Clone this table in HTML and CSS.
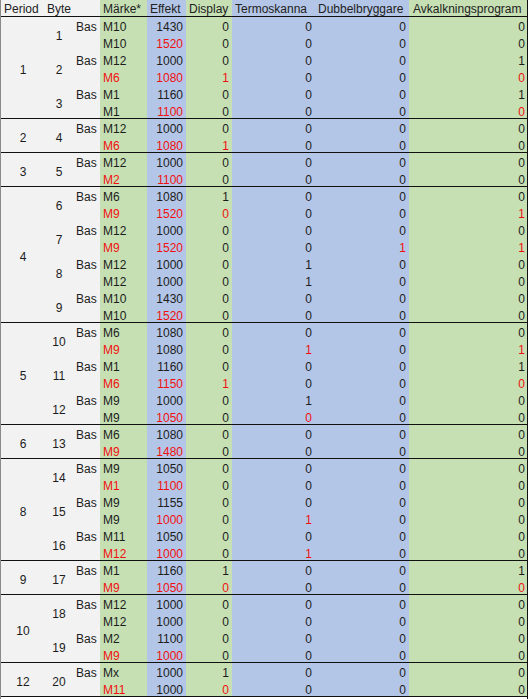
FILE: index.html
```html
<!DOCTYPE html>
<html>
<head>
<meta charset="utf-8">
<link rel="stylesheet" href="styles.css">
</head>
<body>
<div class="sheet">
  <div class="head">
    <div class="c hp">Period</div><div class="c hb">Byte</div><div class="c bas"></div>
    <div class="c mk">Märke*</div><div class="c ef">Effekt</div><div class="c di">Display</div>
    <div class="c te">Termoskanna</div><div class="c du">Dubbelbryggare</div><div class="c av">Avkalkningsprogram</div>
  </div>

  <div class="grp r6">
    <div class="p">1</div>
    <div class="b">1</div><div class="c bas">Bas</div><div class="c mk">M10</div><div class="c ef">1430</div><div class="c di">0</div><div class="c te">0</div><div class="c du">0</div><div class="c av">0</div>
    <div class="c bas"></div><div class="c mk">M10</div><div class="c ef red">1520</div><div class="c di">0</div><div class="c te">0</div><div class="c du">0</div><div class="c av">0</div>
    <div class="b">2</div><div class="c bas">Bas</div><div class="c mk">M12</div><div class="c ef">1000</div><div class="c di">0</div><div class="c te">0</div><div class="c du">0</div><div class="c av">1</div>
    <div class="c bas"></div><div class="c mk red">M6</div><div class="c ef red">1080</div><div class="c di red">1</div><div class="c te">0</div><div class="c du">0</div><div class="c av red">0</div>
    <div class="b">3</div><div class="c bas">Bas</div><div class="c mk">M1</div><div class="c ef">1160</div><div class="c di">0</div><div class="c te">0</div><div class="c du">0</div><div class="c av">1</div>
    <div class="c bas"></div><div class="c mk">M1</div><div class="c ef red">1100</div><div class="c di">0</div><div class="c te">0</div><div class="c du">0</div><div class="c av red">0</div>
  </div>

  <div class="grp r2">
    <div class="p">2</div>
    <div class="b">4</div><div class="c bas">Bas</div><div class="c mk">M12</div><div class="c ef">1000</div><div class="c di">0</div><div class="c te">0</div><div class="c du">0</div><div class="c av">0</div>
    <div class="c bas"></div><div class="c mk red">M6</div><div class="c ef red">1080</div><div class="c di red">1</div><div class="c te">0</div><div class="c du">0</div><div class="c av">0</div>
  </div>

  <div class="grp r2">
    <div class="p">3</div>
    <div class="b">5</div><div class="c bas">Bas</div><div class="c mk">M12</div><div class="c ef">1000</div><div class="c di">0</div><div class="c te">0</div><div class="c du">0</div><div class="c av">0</div>
    <div class="c bas"></div><div class="c mk red">M2</div><div class="c ef red">1100</div><div class="c di">0</div><div class="c te">0</div><div class="c du">0</div><div class="c av">0</div>
  </div>

  <div class="grp r8">
    <div class="p">4</div>
    <div class="b">6</div><div class="c bas">Bas</div><div class="c mk">M6</div><div class="c ef">1080</div><div class="c di">1</div><div class="c te">0</div><div class="c du">0</div><div class="c av">0</div>
    <div class="c bas"></div><div class="c mk red">M9</div><div class="c ef red">1520</div><div class="c di red">0</div><div class="c te">0</div><div class="c du">0</div><div class="c av red">1</div>
    <div class="b">7</div><div class="c bas">Bas</div><div class="c mk">M12</div><div class="c ef">1000</div><div class="c di">0</div><div class="c te">0</div><div class="c du">0</div><div class="c av">0</div>
    <div class="c bas"></div><div class="c mk red">M9</div><div class="c ef red">1520</div><div class="c di">0</div><div class="c te">0</div><div class="c du red">1</div><div class="c av red">1</div>
    <div class="b">8</div><div class="c bas">Bas</div><div class="c mk">M12</div><div class="c ef">1000</div><div class="c di">0</div><div class="c te">1</div><div class="c du">0</div><div class="c av">0</div>
    <div class="c bas"></div><div class="c mk">M12</div><div class="c ef">1000</div><div class="c di">0</div><div class="c te">1</div><div class="c du">0</div><div class="c av">0</div>
    <div class="b">9</div><div class="c bas">Bas</div><div class="c mk">M10</div><div class="c ef">1430</div><div class="c di">0</div><div class="c te">0</div><div class="c du">0</div><div class="c av">0</div>
    <div class="c bas"></div><div class="c mk">M10</div><div class="c ef red">1520</div><div class="c di">0</div><div class="c te">0</div><div class="c du">0</div><div class="c av">0</div>
  </div>

  <div class="grp r6">
    <div class="p">5</div>
    <div class="b">10</div><div class="c bas">Bas</div><div class="c mk">M6</div><div class="c ef">1080</div><div class="c di">0</div><div class="c te">0</div><div class="c du">0</div><div class="c av">0</div>
    <div class="c bas"></div><div class="c mk red">M9</div><div class="c ef">1080</div><div class="c di">0</div><div class="c te red">1</div><div class="c du">0</div><div class="c av red">1</div>
    <div class="b">11</div><div class="c bas">Bas</div><div class="c mk">M1</div><div class="c ef">1160</div><div class="c di">0</div><div class="c te">0</div><div class="c du">0</div><div class="c av">1</div>
    <div class="c bas"></div><div class="c mk red">M6</div><div class="c ef red">1150</div><div class="c di red">1</div><div class="c te">0</div><div class="c du">0</div><div class="c av red">0</div>
    <div class="b">12</div><div class="c bas">Bas</div><div class="c mk">M9</div><div class="c ef">1000</div><div class="c di">0</div><div class="c te">1</div><div class="c du">0</div><div class="c av">0</div>
    <div class="c bas"></div><div class="c mk">M9</div><div class="c ef red">1050</div><div class="c di">0</div><div class="c te red">0</div><div class="c du">0</div><div class="c av">0</div>
  </div>

  <div class="grp r2">
    <div class="p">6</div>
    <div class="b">13</div><div class="c bas">Bas</div><div class="c mk">M6</div><div class="c ef">1080</div><div class="c di">0</div><div class="c te">0</div><div class="c du">0</div><div class="c av">0</div>
    <div class="c bas"></div><div class="c mk red">M9</div><div class="c ef red">1480</div><div class="c di">0</div><div class="c te">0</div><div class="c du">0</div><div class="c av">0</div>
  </div>

  <div class="grp r6">
    <div class="p">8</div>
    <div class="b">14</div><div class="c bas">Bas</div><div class="c mk">M9</div><div class="c ef">1050</div><div class="c di">0</div><div class="c te">0</div><div class="c du">0</div><div class="c av">0</div>
    <div class="c bas"></div><div class="c mk red">M1</div><div class="c ef red">1100</div><div class="c di">0</div><div class="c te">0</div><div class="c du">0</div><div class="c av">0</div>
    <div class="b">15</div><div class="c bas">Bas</div><div class="c mk">M9</div><div class="c ef">1155</div><div class="c di">0</div><div class="c te">0</div><div class="c du">0</div><div class="c av">0</div>
    <div class="c bas"></div><div class="c mk">M9</div><div class="c ef red">1000</div><div class="c di">0</div><div class="c te red">1</div><div class="c du">0</div><div class="c av">0</div>
    <div class="b">16</div><div class="c bas">Bas</div><div class="c mk">M11</div><div class="c ef">1050</div><div class="c di">0</div><div class="c te">0</div><div class="c du">0</div><div class="c av">0</div>
    <div class="c bas"></div><div class="c mk red">M12</div><div class="c ef red">1000</div><div class="c di">0</div><div class="c te red">1</div><div class="c du">0</div><div class="c av">0</div>
  </div>

  <div class="grp r2">
    <div class="p">9</div>
    <div class="b">17</div><div class="c bas">Bas</div><div class="c mk">M1</div><div class="c ef">1160</div><div class="c di">1</div><div class="c te">0</div><div class="c du">0</div><div class="c av">1</div>
    <div class="c bas"></div><div class="c mk red">M9</div><div class="c ef red">1050</div><div class="c di red">0</div><div class="c te">0</div><div class="c du">0</div><div class="c av red">0</div>
  </div>

  <div class="grp r4">
    <div class="p">10</div>
    <div class="b">18</div><div class="c bas">Bas</div><div class="c mk">M12</div><div class="c ef">1000</div><div class="c di">0</div><div class="c te">0</div><div class="c du">0</div><div class="c av">0</div>
    <div class="c bas"></div><div class="c mk">M12</div><div class="c ef">1000</div><div class="c di">0</div><div class="c te">0</div><div class="c du">0</div><div class="c av">0</div>
    <div class="b">19</div><div class="c bas">Bas</div><div class="c mk">M2</div><div class="c ef">1100</div><div class="c di">0</div><div class="c te">0</div><div class="c du">0</div><div class="c av">0</div>
    <div class="c bas"></div><div class="c mk red">M9</div><div class="c ef red">1000</div><div class="c di">0</div><div class="c te">0</div><div class="c du">0</div><div class="c av">0</div>
  </div>

  <div class="grp r2">
    <div class="p">12</div>
    <div class="b">20</div><div class="c bas">Bas</div><div class="c mk">Mx</div><div class="c ef">1000</div><div class="c di">1</div><div class="c te">0</div><div class="c du">0</div><div class="c av">0</div>
    <div class="c bas"></div><div class="c mk red">M11</div><div class="c ef">1000</div><div class="c di red">0</div><div class="c te">0</div><div class="c du">0</div><div class="c av">0</div>
  </div>
</div>
</body>
</html>
```

FILE: styles.css
```css
html, body {
  margin: 0;
  padding: 0;
  background: #ffffff;
}

body {
  font-family: "Liberation Sans", Arial, sans-serif;
  font-size: 12px;
  color: #1c1c1c;
}

.sheet {
  width: 526px;
  border-left: 1px solid #8a8a8a;
  border-right: 1px solid #111111;
  padding-bottom: 2px;
}

.head,
.grp {
  display: grid;
  grid-template-columns: 44px 28px 27px 47px 39px 46px 84px 93px 118px;
  background: #f2f2f2;
  border-bottom: 1px solid #111111;
}

.head {
  grid-template-rows: 16px;
  color: #222222;
}

.r2 { grid-template-rows: 17px 16px; }
.r4 { grid-template-rows: repeat(3, 17px) 16px; }
.r6 { grid-template-rows: repeat(5, 17px) 16px; }
.r8 { grid-template-rows: repeat(7, 17px) 16px; }

.c {
  line-height: 16px;
  padding: 2px 3px 0;
  white-space: nowrap;
  overflow: visible;
}

.head .c {
  text-align: left;
  padding-top: 1px;
}

.hp { grid-column: 1; padding-left: 3px; }
.hb { grid-column: 2; padding-left: 2px; }

.p {
  grid-column: 1;
  grid-row: 1 / -1;
  display: flex;
  align-items: center;
  justify-content: center;
  padding-top: 4px;
}

.b {
  grid-column: 2;
  grid-row: span 2;
  display: flex;
  align-items: center;
  justify-content: center;
  padding-top: 4px;
}

.bas { grid-column: 3; text-align: right; padding-right: 4px; }
.mk { grid-column: 4; background: #c6e0b4; }
.ef { grid-column: 5; background: #b4c6e7; text-align: right; }
.di { grid-column: 6; background: #c6e0b4; text-align: right; }
.te { grid-column: 7; background: #b4c6e7; text-align: right; padding-right: 4px; }
.du { grid-column: 8; background: #b4c6e7; text-align: right; }
.av { grid-column: 9; background: #c6e0b4; text-align: right; padding-right: 2px; }

.head .du { padding-left: 2px; }
.head .av { padding-left: 4px; }

.red { color: #f01010; }
```
